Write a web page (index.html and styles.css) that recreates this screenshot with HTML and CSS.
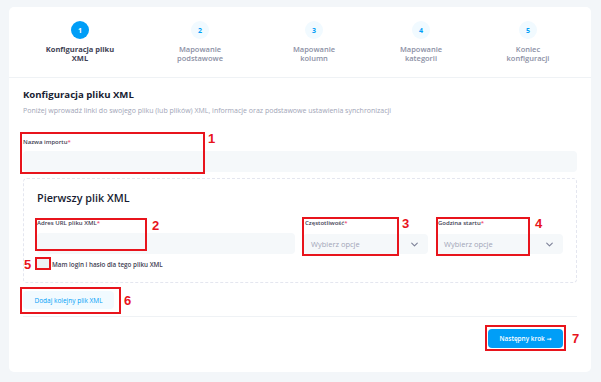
FILE: index.html
```html
<!DOCTYPE html>
<html lang="pl">
<head>
<meta charset="utf-8">
<title>Konfiguracja pliku XML</title>
<link rel="stylesheet" href="styles.css">
</head>
<body>
<div class="page">
  <div class="card">
    <div class="stepper">
      <div class="step active"><div class="num">1</div><div class="step-lbl">Konfiguracja pliku<br>XML</div></div>
      <div class="step"><div class="num">2</div><div class="step-lbl">Mapowanie<br>podstawowe</div></div>
      <div class="step"><div class="num">3</div><div class="step-lbl">Mapowanie<br>kolumn</div></div>
      <div class="step"><div class="num">4</div><div class="step-lbl">Mapowanie<br>kategorii</div></div>
      <div class="step"><div class="num">5</div><div class="step-lbl">Koniec<br>konfiguracji</div></div>
    </div>
    <div class="body">
      <h1 class="title">Konfiguracja pliku XML</h1>
      <p class="sub">Poniżej wprowadź linki do swojego pliku (lub plików) XML, informacje oraz podstawowe ustawienia synchronizacji</p>
      <label class="flbl name-lbl">Nazwa importu<span class="req">*</span></label>
      <div class="input"></div>
      <div class="xmlbox">
        <h2 class="xml-title">Pierwszy plik XML</h2>
        <div class="grid">
          <div class="col">
            <label class="flbl">Adres URL pliku XML<span class="req">*</span></label>
            <div class="input"></div>
            <div class="check-row"><span class="check"></span><span class="check-lbl">Mam login i hasło dla tego pliku XML</span></div>
          </div>
          <div class="col sel-col">
            <label class="flbl">Częstotliwość<span class="req">*</span></label>
            <div class="select"><span>Wybierz opcje</span><svg class="chev" viewBox="0 0 10 6" width="7" height="5"><path d="M1 1l4 4 4-4" fill="none" stroke="#7e8299" stroke-width="1.6" stroke-linecap="round" stroke-linejoin="round"/></svg></div>
          </div>
          <div class="col sel-col">
            <label class="flbl">Godzina startu<span class="req">*</span></label>
            <div class="select"><span>Wybierz opcje</span><svg class="chev" viewBox="0 0 10 6" width="7" height="5"><path d="M1 1l4 4 4-4" fill="none" stroke="#7e8299" stroke-width="1.6" stroke-linecap="round" stroke-linejoin="round"/></svg></div>
          </div>
        </div>
      </div>
      <button class="btn-light">Dodaj kolejny plik XML</button>
    </div>
    <div class="footer">
      <button class="btn-primary">Następny krok <span class="arrow">→</span></button>
    </div>
  </div>

  <div class="ann a1"></div><span class="ann-n n1">1</span>
  <div class="ann a2"></div><span class="ann-n n2">2</span>
  <div class="ann a3"></div><span class="ann-n n3">3</span>
  <div class="ann a4"></div><span class="ann-n n4">4</span>
  <div class="ann a5"></div><span class="ann-n n5">5</span>
  <div class="ann a6"></div><span class="ann-n n6">6</span>
  <div class="ann a7"></div><span class="ann-n n7">7</span>
</div>
</body>
</html>
```
FILE: styles.css
```css
* { box-sizing: border-box; margin: 0; padding: 0; }
html, body { background: #f3f6f9; }
body { font-family: "Open Sans", "DejaVu Sans", sans-serif; color: #181c32; width: 601px; height: 382px; overflow: hidden; }
.page { position: relative; padding: 7px 10px 10px 9px; }
.card { background: #fff; width: 582px; height: 365px; border-radius: 5px; display: flex; flex-direction: column; }

.stepper { height: 71px; border-bottom: 1px solid #eff2f5; padding: 14px 0 0 11px; display: grid; grid-template-columns: 120px 120px 108px 106px 108px; }
.step { display: flex; flex-direction: column; align-items: center; }
.num { width: 18px; height: 18px; border-radius: 50%; background: #f1faff; color: #009ef7; font-size: 7px; font-weight: 700; display: flex; align-items: center; justify-content: center; }
.step.active .num { background: #009ef7; color: #fff; }
.step-lbl { margin-top: 5.5px; font-size: 7.5px; line-height: 9.5px; text-align: center; color: #8c90a5; font-weight: 600; }
.step.active .step-lbl { color: #3f4254; font-weight: 700; }

.body { padding: 10px 14px 7px 14px; display: flex; flex-direction: column; align-items: flex-start; }
.title { font-size: 9.6px; line-height: 14px; font-weight: 700; color: #181c32; }
.sub { margin-top: 4px; font-size: 7px; line-height: 9px; color: #a1a5b7; }
.flbl { display: block; font-size: 6px; line-height: 8px; color: #3f4254; font-weight: 600; }
.name-lbl { margin-top: 23px; }
.req { color: #f1416c; }
.input { margin-top: 5px; height: 21px; width: 100%; background: #f5f8fa; border-radius: 4px; }
.body > .input { width: 554px; }

.xmlbox { margin-top: 6px; width: 554px; border: 1px dashed #e4e6ef; border-radius: 4px; padding: 11px 13px 12px 13px; }
.xml-title { font-size: 10.8px; line-height: 16px; font-weight: 600; color: #181c32; }
.grid { margin-top: 13px; display: grid; grid-template-columns: 258px 125px 127px; column-gap: 8px; align-items: start; }
.col .input { margin-top: 6px; }
.sel-col .flbl { padding-left: 2px; }
.select { margin-top: 7px; height: 20px; background: #f5f8fa; border-radius: 4px; display: flex; align-items: center; justify-content: space-between; padding: 0 10px 0 8px; font-size: 7.5px; color: #a1a5b7; }
.chev { display: block; }
.check-row { margin-top: 4px; display: flex; align-items: center; height: 12px; }
.check { width: 13px; height: 12px; background: #eef1f5; border-radius: 2px; margin-left: -1px; }
.check-lbl { margin-left: 3px; font-size: 6.3px; color: #3f4254; font-weight: 600; }

.btn-light { margin-top: 8px; width: 91px; height: 18px; border: 0; border-radius: 4px; background: #f1faff; color: #009ef7; font-family: inherit; font-size: 6.5px; font-weight: 500; }

.footer { margin: 0 14px; border-top: 1px solid #eff2f5; padding-top: 12px; display: flex; justify-content: flex-end; padding-right: 14px; }
.btn-primary { width: 75px; height: 19px; border: 0; border-radius: 4px; background: #009ef7; color: #fff; font-family: inherit; font-size: 6.4px; font-weight: 600; }
.arrow { font-size: 6px; }

.ann { position: absolute; border: 2px solid #e8141c; }
.ann-n { position: absolute; font-family: "Liberation Sans", Arial, sans-serif; font-weight: 700; font-size: 13px; line-height: 13px; color: #e8141c; }
.a1 { left: 20px; top: 132px; width: 185px; height: 42px; }
.n1 { left: 208px; top: 132px; }
.a2 { left: 35px; top: 218px; width: 112px; height: 33px; }
.n2 { left: 152px; top: 219px; }
.a3 { left: 302px; top: 217px; width: 97px; height: 39px; }
.n3 { left: 402px; top: 217px; }
.a4 { left: 436px; top: 217px; width: 94px; height: 39px; }
.n4 { left: 535px; top: 217px; }
.a5 { left: 35px; top: 257px; width: 16px; height: 13px; }
.n5 { left: 24px; top: 258px; }
.a6 { left: 20px; top: 287px; width: 101px; height: 27px; }
.n6 { left: 124px; top: 294px; }
.a7 { left: 485px; top: 325px; width: 81px; height: 26px; }
.n7 { left: 572px; top: 332px; }
```
